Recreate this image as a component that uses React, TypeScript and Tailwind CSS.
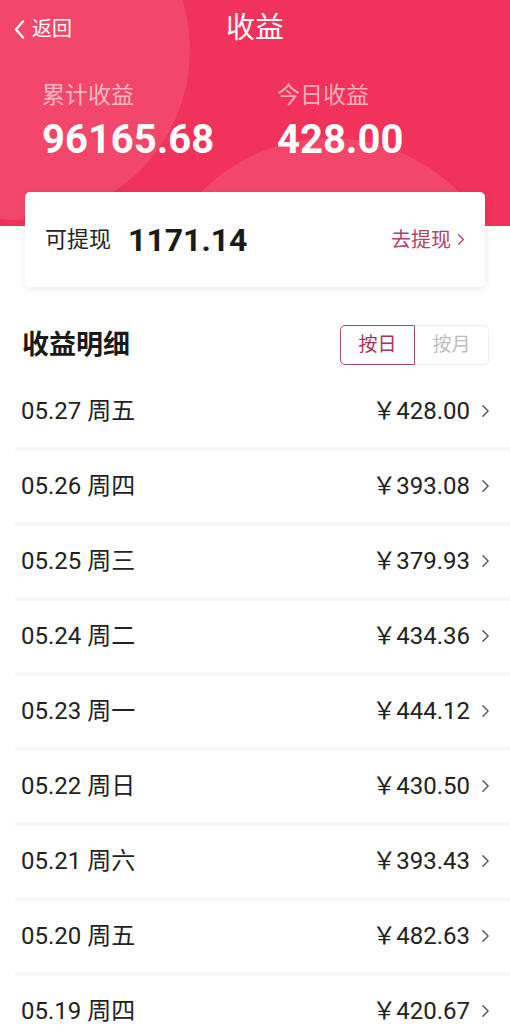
const rows = [
  { date: "05.27 周五", amount: "428.00" },
  { date: "05.26 周四", amount: "393.08" },
  { date: "05.25 周三", amount: "379.93" },
  { date: "05.24 周二", amount: "434.36" },
  { date: "05.23 周一", amount: "444.12" },
  { date: "05.22 周日", amount: "430.50" },
  { date: "05.21 周六", amount: "393.43" },
  { date: "05.20 周五", amount: "482.63" },
  { date: "05.19 周四", amount: "420.67" },
];

function Chevron({ className }: { className?: string }) {
  return (
    <svg viewBox="0 0 10 16" className={className} fill="none" stroke="currentColor" strokeWidth="1.6" strokeLinecap="round" strokeLinejoin="round">
      <path d="M2 2l6 6-6 6" />
    </svg>
  );
}

export default function App() {
  return (
    <div
      className="min-h-screen w-[510px] overflow-hidden bg-white text-[#222]"
      style={{ fontFamily: 'Roboto, "Noto Sans CJK SC", sans-serif' }}
    >
      <header className="relative h-[226px] overflow-hidden bg-[#f1325a] text-white">
        <div className="absolute -left-[150px] -top-[120px] h-[340px] w-[340px] rounded-full bg-white/10" />
        <div className="absolute left-[150px] top-[138px] h-[360px] w-[360px] rounded-full bg-white/10" />
        <div className="relative flex h-[58px] items-center px-[13px]">
          <div className="flex items-center gap-[7px] text-[20px]">
            <svg viewBox="0 0 12 20" className="h-[21px] w-[12px]" fill="none" stroke="currentColor" strokeWidth="2.4" strokeLinecap="round" strokeLinejoin="round">
              <path d="M10 2L3 10l7 8" />
            </svg>
            <span>返回</span>
          </div>
          <div className="absolute left-0 right-0 text-center text-[29px]">收益</div>
        </div>
        <div className="relative flex pl-[42px] pt-[22px]">
          <div className="w-[235px]">
            <div className="text-[23px] leading-[32px] text-white/60">累计收益</div>
            <div className="mt-[2px] text-[40px] font-bold leading-[52px]">96165.68</div>
          </div>
          <div>
            <div className="text-[23px] leading-[32px] text-white/60">今日收益</div>
            <div className="mt-[2px] text-[40px] font-bold leading-[52px]">428.00</div>
          </div>
        </div>
      </header>

      <div className="relative z-10 mx-[25px] -mt-[34px] flex h-[95px] items-center rounded-[5px] bg-white px-[20px] shadow-[0_2px_8px_rgba(0,0,0,0.08)]">
        <span className="text-[22px] text-[#222]">可提现</span>
        <span className="ml-[17px] text-[32px] font-bold text-[#1a1a1a]">1171.14</span>
        <div className="ml-auto flex items-center gap-[6px] text-[20px] text-[#b0436a]">
          <span>去提现</span>
          <Chevron className="h-[13px] w-[8px]" />
        </div>
      </div>

      <div className="mt-[38px] flex items-center justify-between pl-[22px] pr-[21px]">
        <h2 className="text-[27px] font-bold text-[#1a1a1a]">收益明细</h2>
        <div className="flex h-[40px] text-[19px]">
          <div className="flex w-[75px] items-center justify-center rounded-l-[5px] border border-[#a84a6c] text-[#a43560]">按日</div>
          <div className="flex w-[74px] items-center justify-center rounded-r-[5px] border border-l-0 border-[#eeeeee] text-[#bdbdbd]">按月</div>
        </div>
      </div>

      <ul className="mt-[10px]">
        {rows.map((r) => (
          <li key={r.date} className="ml-[15px] flex h-[75px] items-center border-b-[4px] border-[#f6f6f8] pl-[6px] pr-[20px]">
            <span className="text-[24px] text-[#222]">{r.date}</span>
            <span className="ml-auto text-[24px] text-[#222]">￥{r.amount}</span>
            <Chevron className="ml-[11px] h-[14px] w-[9px] text-[#555]" />
          </li>
        ))}
      </ul>
    </div>
  );
}
